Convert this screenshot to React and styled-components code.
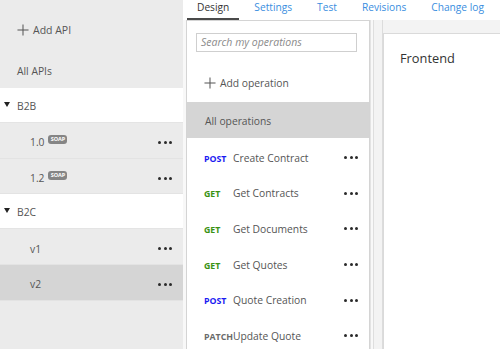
import React from "react";
import styled, { createGlobalStyle } from "styled-components";

const Global = createGlobalStyle`
  html, body { margin: 0; padding: 0; background: #fff; }
  body { font-family: "Open Sans", "Noto Sans", sans-serif; overflow: hidden; }
  * { box-sizing: border-box; }
`;

const Page = styled.div`
  display: flex;
  width: 500px;
  height: 349px;
  overflow: hidden;
  font-size: 10.3px;
  color: #555;
`;

const Sidebar = styled.div`
  width: 183px;
  flex: none;
  background: #ebebeb;
  display: flex;
  flex-direction: column;
  & > * { flex: none; }
`;

const AddRow = styled.div`
  height: 55px;
  display: flex;
  align-items: center;
  gap: 4px;
  padding: 4px 0 0 17px;
  font-size: 10.5px;
  color: #555;
`;

const AllRow = styled.div`
  height: 33px;
  display: flex;
  align-items: center;
  padding: 0 0 2px 17px;
  color: #555;
`;

const GroupRow = styled.div`
  height: 35px;
  background: #fff;
  display: flex;
  align-items: center;
  padding: 1px 0 0 4px;
  gap: 7px;
  border-bottom: 1px solid #e4e4e4;
`;

const Caret = styled.span`
  width: 0;
  height: 0;
  border-left: 3px solid transparent;
  border-right: 3px solid transparent;
  border-top: 5px solid #222;
  margin-top: -3px;
`;

const ApiRow = styled.div`
  height: 35.7px;
  display: flex;
  align-items: center;
  padding: 4px 11px 0 30px;
  background: ${(p) => (p.$active ? "#d5d5d5" : "transparent")};
  border-bottom: 1px solid #e3e3e3;
`;

const Label = styled.span`
  flex: 1;
  display: flex;
  align-items: center;
  gap: 4px;
`;

const Soap = styled.span`
  display: inline-block;
  background: #858585;
  color: #fff;
  font-size: 5.5px;
  font-weight: 700;
  line-height: 9px;
  height: 9px;
  width: 19px;
  text-align: center;
  border-radius: 3px;
  margin-top: -6px;
`;

const Dots = styled.span`
  display: flex;
  gap: 2.5px;
  span {
    width: 3px;
    height: 3px;
    border-radius: 50%;
    background: #2a2a2a;
  }
`;

const More = () => (
  <Dots>
    <span />
    <span />
    <span />
  </Dots>
);

const Main = styled.div`
  flex: 1;
  display: flex;
  flex-direction: column;
  min-width: 0;
`;

const Tabs = styled.div`
  height: 20px;
  display: flex;
  align-items: flex-start;
  gap: 5px;
  padding-left: 4px;
  background: #fff;
  flex: none;
`;

const Tab = styled.div`
  height: 20px;
  padding: 0 10px;
  font-size: 10.2px;
  line-height: 14px;
  color: ${(p) => (p.$active ? "#333" : "#3a8ee0")};
  border-bottom: ${(p) => (p.$active ? "2px solid #4a4a4a" : "2px solid transparent")};
  white-space: nowrap;
`;

const Body = styled.div`
  flex: 1;
  display: flex;
  background: #f8f8f8;
  padding-left: 3px;
  min-height: 0;
`;

const OpsPanel = styled.div`
  width: 184px;
  flex: none;
  background: #fff;
  border: 1px solid #d4d4d4;
  border-bottom: none;
  display: flex;
  flex-direction: column;
  overflow: hidden;
  & > * { flex: none; }
`;

const Search = styled.div`
  margin: 12px 12px 0 9px;
  height: 19px;
  border: 1px solid #cfcfcf;
  font-style: italic;
  color: #8a8a8a;
  font-size: 10.5px;
  line-height: 17px;
  padding-left: 4px;
`;

const AddOp = styled.div`
  height: 50px;
  display: flex;
  align-items: center;
  gap: 4px;
  padding: 12px 0 0 17px;
  color: #555;
`;

const AllOps = styled.div`
  height: 36px;
  background: #d5d5d5;
  display: flex;
  align-items: center;
  padding: 1px 0 0 18px;
  color: #555;
`;

const OpRow = styled.div`
  height: 35.6px;
  display: flex;
  align-items: center;
  padding: 4px 11px 0 17px;
`;

const methodColor = { POST: "#1a1af2", GET: "#3a9214", PATCH: "#6a6a6a" };

const Method = styled.span`
  width: 29px;
  flex: none;
  font-size: 8.8px;
  font-weight: 700;
  color: ${(p) => methodColor[p.$m]};
  padding-top: 2px;
  white-space: nowrap;
`;

const OpName = styled.span`
  flex: 1;
  color: #555;
  white-space: nowrap;
`;

const Strip = styled.div`
  width: 13px;
  flex: none;
  background: #f3f3f3;
  border-left: 1px solid #e3e3e3;
  border-right: 1px solid #dcdcdc;
  box-shadow: inset 2px 0 0 #f8f8f8, inset 3px 0 0 #dedede;
`;

const Right = styled.div`
  flex: 1;
  background: #f3f3f3;
  padding-top: 13px;
  display: flex;
`;

const Detail = styled.div`
  flex: 1;
  background: #fff;
  border-top: 1px solid #dadada;
  border-left: 1px solid #dadada;
  padding: 15px 0 0 16px;
`;

const Title = styled.div`
  font-size: 12.8px;
  color: #333;
`;

const Plus = ({ size = 13 }) => (
  <svg width={size} height={size} viewBox="0 0 13 13">
    <path d="M6.5 0.5v12M0.5 6.5h12" stroke="#555" strokeWidth="1.1" fill="none" />
  </svg>
);

const ops = [
  ["POST", "Create Contract"],
  ["GET", "Get Contracts"],
  ["GET", "Get Documents"],
  ["GET", "Get Quotes"],
  ["POST", "Quote Creation"],
  ["PATCH", "Update Quote"],
];

export default function App() {
  return (
    <>
      <Global />
      <Page>
        <Sidebar>
          <AddRow>
            <Plus size={12} />
            Add API
          </AddRow>
          <AllRow>All APIs</AllRow>
          <GroupRow>
            <Caret />
            B2B
          </GroupRow>
          <ApiRow>
            <Label>
              1.0<Soap>SOAP</Soap>
            </Label>
            <More />
          </ApiRow>
          <ApiRow>
            <Label>
              1.2<Soap>SOAP</Soap>
            </Label>
            <More />
          </ApiRow>
          <GroupRow>
            <Caret />
            B2C
          </GroupRow>
          <ApiRow>
            <Label>v1</Label>
            <More />
          </ApiRow>
          <ApiRow $active>
            <Label>v2</Label>
            <More />
          </ApiRow>
        </Sidebar>
        <Main>
          <Tabs>
            <Tab $active>Design</Tab>
            <Tab>Settings</Tab>
            <Tab>Test</Tab>
            <Tab>Revisions</Tab>
            <Tab>Change log</Tab>
          </Tabs>
          <Body>
            <OpsPanel>
              <Search>Search my operations</Search>
              <AddOp>
                <Plus size={12} />
                Add operation
              </AddOp>
              <AllOps>All operations</AllOps>
              {ops.map(([m, n]) => (
                <OpRow key={n}>
                  <Method $m={m}>{m}</Method>
                  <OpName>{n}</OpName>
                  <More />
                </OpRow>
              ))}
            </OpsPanel>
            <Strip />
            <Right>
              <Detail>
                <Title>Frontend</Title>
              </Detail>
            </Right>
          </Body>
        </Main>
      </Page>
    </>
  );
}
